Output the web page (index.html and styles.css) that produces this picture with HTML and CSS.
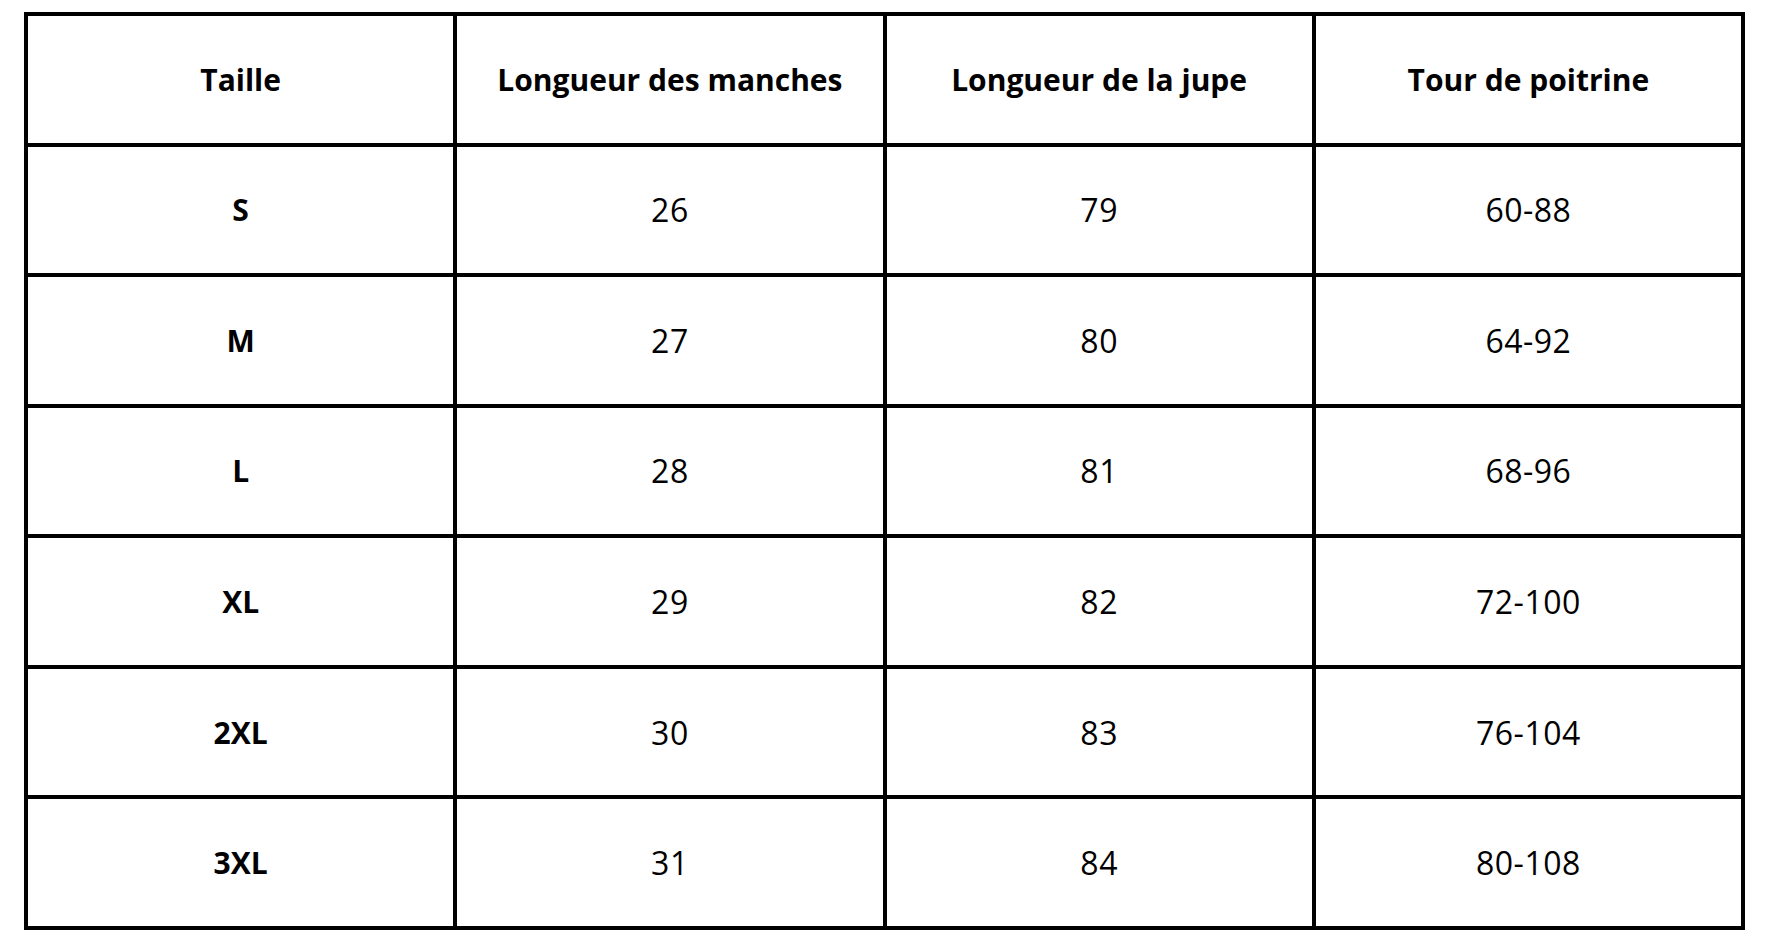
FILE: index.html
```html
<!DOCTYPE html>
<html lang="fr">
<head>
<meta charset="utf-8">
<title>Guide des tailles</title>
<link rel="stylesheet" href="styles.css">
</head>
<body>
<div class="size-table">
  <div class="cell head">Taille</div>
  <div class="cell head">Longueur des manches</div>
  <div class="cell head">Longueur de la jupe</div>
  <div class="cell head">Tour de poitrine</div>

  <div class="cell head">S</div>
  <div class="cell">26</div>
  <div class="cell">79</div>
  <div class="cell">60-88</div>

  <div class="cell head">M</div>
  <div class="cell">27</div>
  <div class="cell">80</div>
  <div class="cell">64-92</div>

  <div class="cell head">L</div>
  <div class="cell">28</div>
  <div class="cell">81</div>
  <div class="cell">68-96</div>

  <div class="cell head">XL</div>
  <div class="cell">29</div>
  <div class="cell">82</div>
  <div class="cell">72-100</div>

  <div class="cell head">2XL</div>
  <div class="cell">30</div>
  <div class="cell">83</div>
  <div class="cell">76-104</div>

  <div class="cell head">3XL</div>
  <div class="cell">31</div>
  <div class="cell">84</div>
  <div class="cell">80-108</div>
</div>
</body>
</html>
```

FILE: styles.css
```css
html, body {
  margin: 0;
  padding: 0;
  background: #ffffff;
}

body {
  padding: 12px 0 0 24px;
  font-family: "Open Sans", "Liberation Sans", sans-serif;
  color: #000;
}

.size-table {
  box-sizing: border-box;
  width: 1721px;
  height: 918px;
  display: grid;
  grid-template-columns: repeat(4, 1fr);
  grid-template-rows: repeat(7, 1fr);
  gap: 4px;
  padding: 4px;
  background: #000;
}

.cell {
  background: #fff;
  display: flex;
  align-items: center;
  justify-content: center;
  font-size: 32px;
  font-weight: 400;
  letter-spacing: 0.5px;
}

.cell.head {
  font-size: 30px;
  font-weight: 700;
  letter-spacing: 0;
}
```
